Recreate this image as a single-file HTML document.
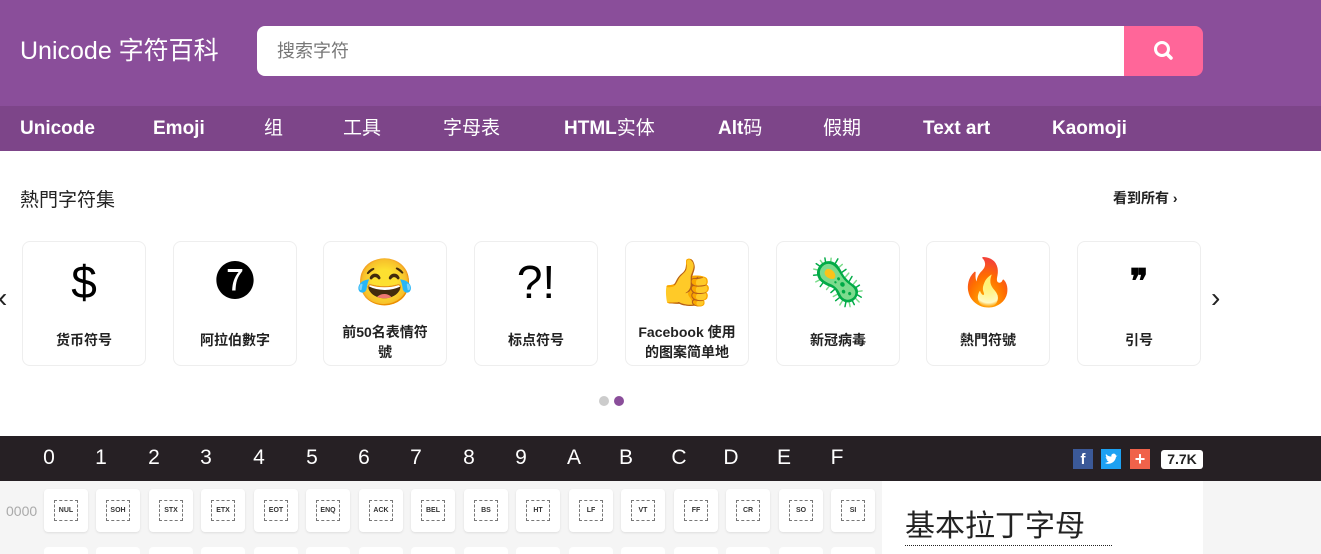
<!DOCTYPE html>
<html><head><meta charset="utf-8"><style>
*{margin:0;padding:0;box-sizing:border-box}
html,body{width:1321px;height:554px;overflow:hidden}
body{background:#fff;font-family:"Liberation Sans","Noto Sans CJK SC",sans-serif;position:relative}
.abs{position:absolute}
#hdr{left:0;top:0;width:1321px;height:106px;background:#8a4e9a}
#logo{left:20px;top:36px;color:#fff;font-size:25px;line-height:30px}
#search{left:257px;top:26px;width:868px;height:50px;background:#fff;border-radius:8px 0 0 8px;font-size:18px;color:#777;padding:0 0 0 20px;line-height:50px}
#sbtn{left:1124px;top:26px;width:79px;height:50px;background:#ff6699;border-radius:0 8px 8px 0}
#nav{left:0;top:106px;width:1321px;height:45px;background:#7d4589}
.nv{top:106px;height:45px;line-height:46px;color:#fff;font-size:19px;font-weight:bold}
.nv.n{font-weight:normal}
.card{top:241px;width:124px;height:125px;border:1px solid #eee;border-radius:8px;background:#fff;text-align:center}
.card .ic{position:absolute;left:0;right:0;top:12px;font-size:46px;line-height:56px}
.card .t{position:absolute;left:12px;right:12px;top:88px;font-size:14px;font-weight:bold;color:#222;line-height:20px}
.card .t2{top:80px}
#bar{left:0;top:436px;width:1321px;height:45px;background:#262024}
.h{top:446px;color:#fff;font-size:21px;width:20px;text-align:center}
#grid{left:0;top:481px;width:1321px;height:73px;background:#f5f5f5}
.c{width:44px;height:43px;background:#fff;border-radius:4px;box-shadow:0 1px 2px #ddd}
.c span{position:absolute;left:10px;top:11px;width:24px;height:21px;border:1px dashed #777;font-size:7px;font-weight:bold;line-height:19px;text-align:center;color:#333}
.r2{top:547px;height:7px;border-radius:4px 4px 0 0;box-shadow:none}
#panel{left:882px;top:481px;width:321px;height:73px;background:#fff}
</style></head><body>
<div class="abs" id="hdr"></div>
<div class="abs" id="logo">Unicode 字符百科</div>
<div class="abs" id="search">搜索字符</div>
<div class="abs" id="sbtn"><svg width="79" height="50"><circle cx="38" cy="23" r="6.5" fill="none" stroke="#fff" stroke-width="3"/><line x1="43" y1="28" x2="47" y2="32" stroke="#fff" stroke-width="3.5" stroke-linecap="round"/></svg></div>
<div class="abs" id="nav"></div>
<div class="abs nv" style="left:20px">Unicode</div>
<div class="abs nv" style="left:153px">Emoji</div>
<div class="abs nv n" style="left:264px">组</div>
<div class="abs nv n" style="left:343px">工具</div>
<div class="abs nv n" style="left:443px">字母表</div>
<div class="abs nv" style="left:564px">HTML<span style="font-weight:normal">实体</span></div>
<div class="abs nv" style="left:718px">Alt<span style="font-weight:normal">码</span></div>
<div class="abs nv n" style="left:823px">假期</div>
<div class="abs nv" style="left:923px">Text art</div>
<div class="abs nv" style="left:1052px">Kaomoji</div>
<div class="abs" style="left:20px;top:185px;font-size:19px;color:#222">熱門字符集</div>
<div class="abs" style="left:1113px;top:188px;font-size:14px;font-weight:bold;color:#222">看到所有 ›</div>
<div class="abs" style="left:-2px;top:282px;font-size:28px;color:#222">‹</div>
<div class="abs" style="left:1211px;top:282px;font-size:28px;color:#222">›</div>
<div class="abs card" style="left:22px"><div class="ic">$</div><div class="t">货币符号</div></div>
<div class="abs card" style="left:173px"><div class="ic" style="font-size:40px">❼</div><div class="t">阿拉伯數字</div></div>
<div class="abs card" style="left:323px"><div class="ic">😂</div><div class="t t2" style="left:14px;right:14px">前50名表情符號</div></div>
<div class="abs card" style="left:474px"><div class="ic">?!</div><div class="t">标点符号</div></div>
<div class="abs card" style="left:625px"><div class="ic">👍</div><div class="t t2" style="left:6px;right:6px">Facebook 使用的图案简单地</div></div>
<div class="abs card" style="left:776px"><div class="ic">🦠</div><div class="t">新冠病毒</div></div>
<div class="abs card" style="left:926px"><div class="ic">🔥</div><div class="t">熱門符號</div></div>
<div class="abs card" style="left:1077px"><div class="ic" style="font-size:34px;font-weight:bold">❞</div><div class="t">引号</div></div>
<div class="abs" style="left:599px;top:396px;width:10px;height:10px;border-radius:5px;background:#ccc"></div>
<div class="abs" style="left:614px;top:396px;width:10px;height:10px;border-radius:5px;background:#8a4e9a"></div>
<div class="abs" id="bar"></div>
<div class="abs h" style="left:39px">0</div><div class="abs h" style="left:91px">1</div><div class="abs h" style="left:144px">2</div><div class="abs h" style="left:196px">3</div><div class="abs h" style="left:249px">4</div><div class="abs h" style="left:302px">5</div><div class="abs h" style="left:354px">6</div><div class="abs h" style="left:406px">7</div><div class="abs h" style="left:459px">8</div><div class="abs h" style="left:511px">9</div><div class="abs h" style="left:564px">A</div><div class="abs h" style="left:616px">B</div><div class="abs h" style="left:669px">C</div><div class="abs h" style="left:721px">D</div><div class="abs h" style="left:774px">E</div><div class="abs h" style="left:827px">F</div>
<div class="abs" style="left:1073px;top:449px;width:20px;height:20px;background:#3b5998;color:#fff;font-weight:bold;font-size:15px;text-align:center;line-height:22px">f</div>
<div class="abs" style="left:1101px;top:449px;width:20px;height:20px;background:#1da1f2"><svg width="20" height="20"><path d="M4 14c4 2 10 0 11-6l1.5-1.5-1.5.3c0-2-2.5-3-4-1.5-.7.7-.8 1.6-.6 2.3C8 7.5 6 6.5 5 5c-.6 1.3 0 2.7 1 3.3-.5 0-1-.1-1.3-.3 0 1.3 1 2.300 2 2.5-.4.1-.8.1-1.2 0 .3 1 1.3 1.8 2.3 1.8C6.8 13.2 5.4 13.8 4 14z" fill="#fff"/></svg></div>
<div class="abs" style="left:1130px;top:449px;width:20px;height:20px;background:#f0624a;color:#fff;font-weight:bold;font-size:18px;text-align:center;line-height:20px">+</div>
<div class="abs" style="left:1161px;top:450px;width:42px;height:19px;background:#fff;border-radius:3px;font-size:14px;font-weight:bold;text-align:center;line-height:19px;color:#222">7.7K</div>
<div class="abs" id="grid"></div>
<div class="abs" style="left:6px;top:503px;font-size:14px;color:#aaa">0000</div>
<div class="abs c" style="left:44px;top:489px"><span>NUL</span></div>
<div class="abs c" style="left:96px;top:489px"><span>SOH</span></div>
<div class="abs c" style="left:149px;top:489px"><span>STX</span></div>
<div class="abs c" style="left:201px;top:489px"><span>ETX</span></div>
<div class="abs c" style="left:254px;top:489px"><span>EOT</span></div>
<div class="abs c" style="left:306px;top:489px"><span>ENQ</span></div>
<div class="abs c" style="left:359px;top:489px"><span>ACK</span></div>
<div class="abs c" style="left:411px;top:489px"><span>BEL</span></div>
<div class="abs c" style="left:464px;top:489px"><span>BS</span></div>
<div class="abs c" style="left:516px;top:489px"><span>HT</span></div>
<div class="abs c" style="left:569px;top:489px"><span>LF</span></div>
<div class="abs c" style="left:621px;top:489px"><span>VT</span></div>
<div class="abs c" style="left:674px;top:489px"><span>FF</span></div>
<div class="abs c" style="left:726px;top:489px"><span>CR</span></div>
<div class="abs c" style="left:779px;top:489px"><span>SO</span></div>
<div class="abs c" style="left:831px;top:489px"><span>SI</span></div>
<div class="abs c r2" style="left:44px"></div><div class="abs c r2" style="left:96px"></div><div class="abs c r2" style="left:149px"></div><div class="abs c r2" style="left:201px"></div><div class="abs c r2" style="left:254px"></div><div class="abs c r2" style="left:306px"></div><div class="abs c r2" style="left:359px"></div><div class="abs c r2" style="left:411px"></div><div class="abs c r2" style="left:464px"></div><div class="abs c r2" style="left:516px"></div><div class="abs c r2" style="left:569px"></div><div class="abs c r2" style="left:621px"></div><div class="abs c r2" style="left:674px"></div><div class="abs c r2" style="left:726px"></div><div class="abs c r2" style="left:779px"></div><div class="abs c r2" style="left:831px"></div>
<div class="abs" id="panel"></div>
<div class="abs" style="left:905px;top:509px;font-size:30px;color:#222;border-bottom:1px dotted #222;width:207px;line-height:36px">基本拉丁字母</div>
</body></html>
